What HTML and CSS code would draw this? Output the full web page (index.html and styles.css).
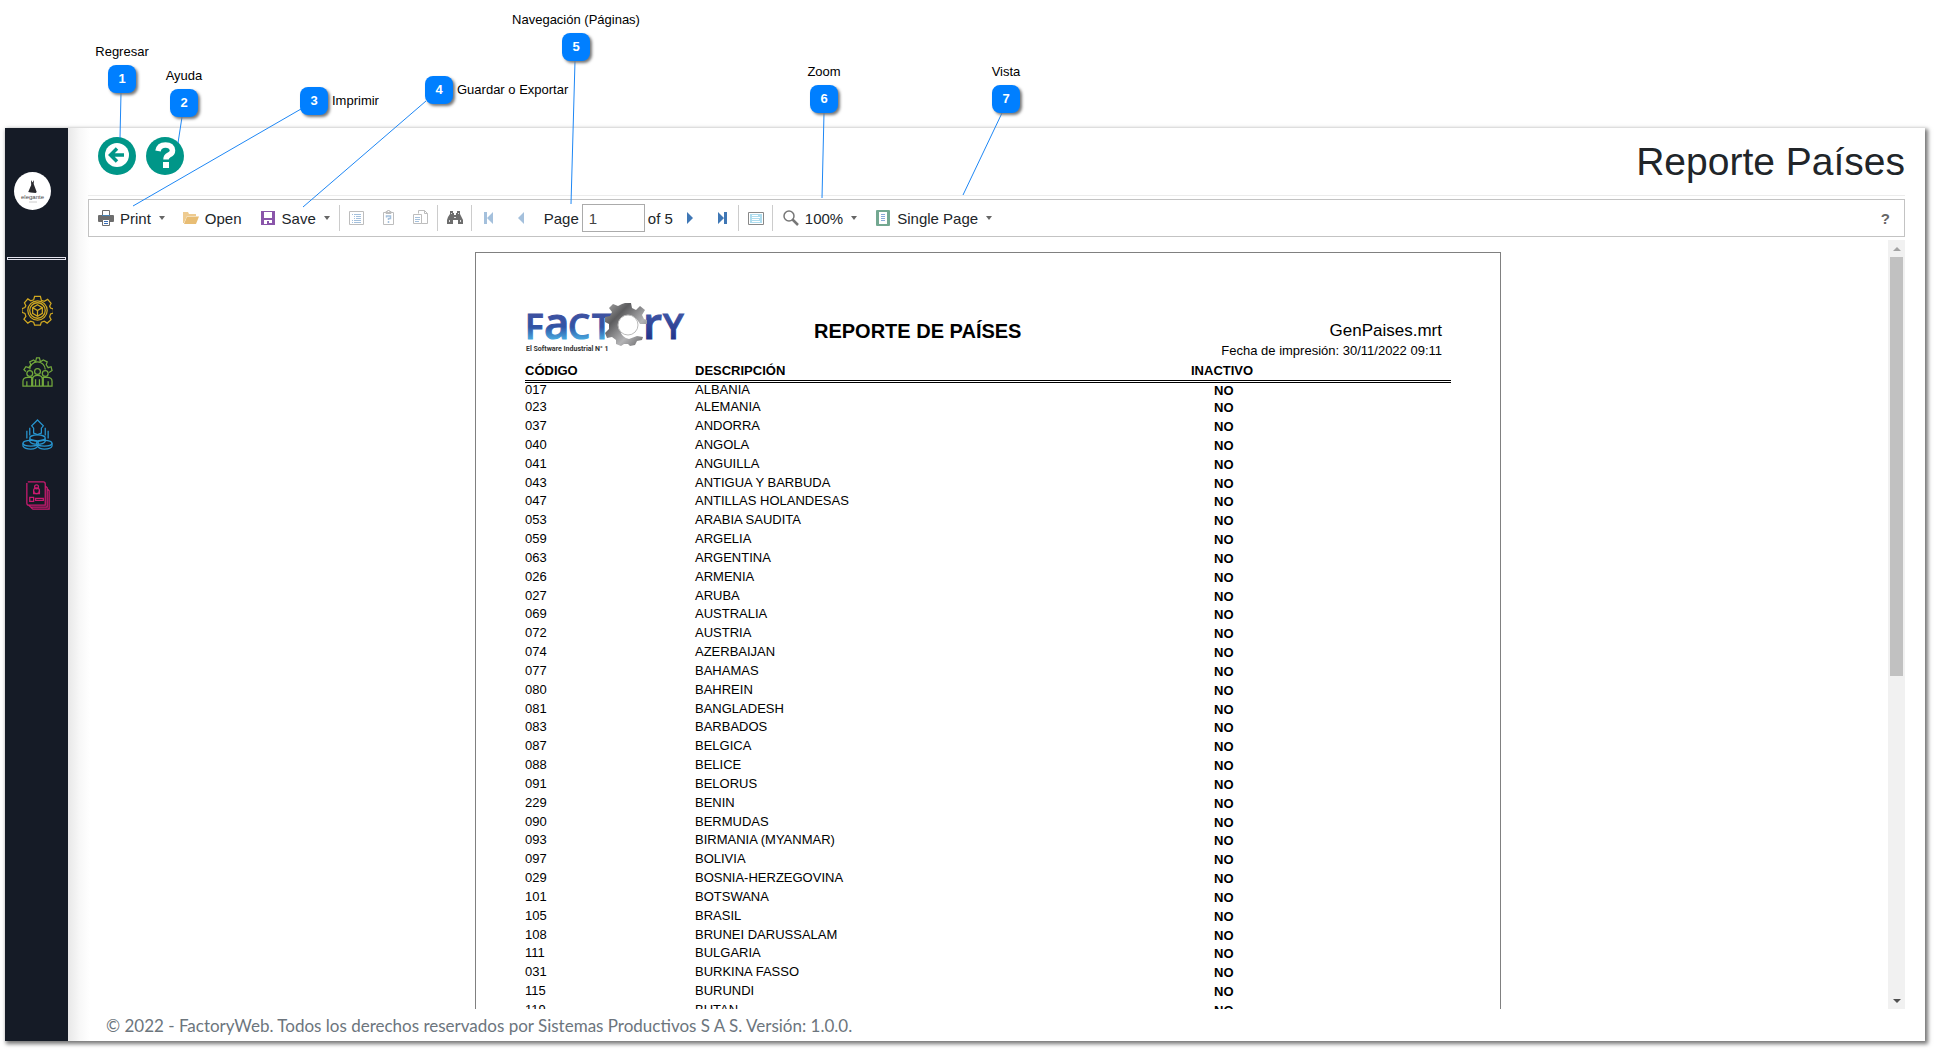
FILE: index.html
```html
<!DOCTYPE html>
<html lang="es">
<head>
<meta charset="utf-8">
<title>Reporte Países</title>
<link rel="stylesheet" href="styles.css">
</head>
<body>
<div class="app">
  <nav class="sidebar" aria-label="Principal">
    <a class="avatar" href="#" aria-label="elegante">
      <svg width="37" height="38" viewBox="0 0 37 38"><path d="M17 8l1.500 2.500L20 8l-.3 4 3 8-1 1-5-.5-2.500-.5 3-7z" fill="#2a2a2e"/><text x="18.500" y="27" text-anchor="middle" class="avatar-name">elegante</text><path d="M15 30h8" stroke="#ccc"/></svg>
    </a>
    <div class="side-rule"></div>
    <a class="side-link yellow" href="#" aria-label="Producción">
      <svg viewBox="0 0 32 32"><path d="M13 1.500h6l1 4 3 1 3.500-2 3.500 4-1.500 3 1 2 3 1v4l-3 1-1 3 1.500 3-4 3.500-3-2-3 1-1 3h-6l-1-3-3-1-3 2-4-4 2-3-1-3-3-1v-4l3-1 1-2-1.500-3 3.500-4 3 2 3-1z"/><circle cx="16" cy="16" r="10"/><circle cx="16" cy="16" r="8"/><path d="M16 10l5 3v6l-5 3-5-3v-6zM11 13l5 3 5-3M16 16v6"/></svg>
    </a>
    <a class="side-link green" href="#" aria-label="Personal">
      <svg viewBox="0 0 32 32"><path d="M4 15l-2-2 2-3 3 1 2-3-1-3 4-2 2 2 1-4h3l1 4 3-2 4 2-1 3 2 3 3-1 1 4-3 2M8 13a8 8 0 0 1 16 0"/><circle cx="8" cy="17" r="3"/><circle cx="16" cy="15" r="3"/><circle cx="24" cy="17" r="3"/><path d="M1 30v-5q0-4 5-4h4v9zM22 30v-9h4q5 0 5 4v5zM11 30v-7q0-4 5-4t5 4v7zM5 25v5M27 25v5M14 23v7M18 23v7M1 30h30"/></svg>
    </a>
    <a class="side-link blue" href="#" aria-label="Finanzas">
      <svg viewBox="0 0 32 32"><path d="M16 1l6 6-2 2.500v5L16 16l-4-1.500v-5L10 7zM5 12v8M8 9v8M24 9v8M27 12v8"/><ellipse cx="16" cy="19.500" rx="8" ry="3"/><path d="M8 20v3q2 3 8 3t8-3v-3"/><ellipse cx="9" cy="25" rx="8" ry="3"/><ellipse cx="23" cy="25" rx="8" ry="3"/><path d="M1 25v3q2 3 8 3 6 0 7-3 2 3 7 3 7 0 8-3v-3"/></svg>
    </a>
    <a class="side-link pink" href="#" aria-label="Documentos">
      <svg viewBox="0 0 32 32"><path d="M6 1h16q2 0 2 2v22H7q-2 0-2-2V2M24 5l2 2v20H9M26 8l2 2v19H11M7 25l2 2 2 2"/><circle cx="15" cy="6" r="2"/><circle cx="15" cy="10" r="3"/><path d="M12 10v3h6v-3M8 17h4v4H8zM14 18h8v2h-8z"/></svg>
    </a>
  </nav>

  <main class="content">
    <header class="page-head">
      <div class="actions">
        <button class="round" type="button" aria-label="Regresar"><svg viewBox="0 0 38 38"><circle cx="19" cy="18" r="12" fill="#fff"/><path d="M19 11.500L12.500 18l6.500 6.500M13 18h13" fill="none" stroke="#009688" stroke-width="3.500"/></svg></button>
        <button class="round" type="button" aria-label="Ayuda"><svg viewBox="0 0 38 38"><path d="M12 14q1-6 7.500-6t7 5.500q0 3-3.500 4.500-3 1.500-3 4.500" fill="none" stroke="#fff" stroke-width="5.500"/><path d="M17 25h6v6h-6z" fill="#fff"/></svg></button>
      </div>
      <h1>Reporte Países</h1>
    </header>

    <div class="toolbar" role="toolbar">
      <button type="button"><svg viewBox="0 0 16 16"><path d="M0 6q0-1 1-1h14q1 0 1 1v5q0 1-1 1H1q-1 0-1-1z" fill="#6d6d6d"/><path d="M4.500 .5h7v5h-7z" fill="#fff" stroke="#6d6d6d"/><path d="M4 5.500h8" stroke="#4682b4"/><path d="M4.500 9.500h7v6h-7z" fill="#fff" stroke="#6d6d6d"/><path d="M6 11.500h4M6 13.500h4" stroke="#3a6eb5"/></svg><span>Print</span><i class="caret"></i></button>
      <button type="button"><svg viewBox="0 0 16 16"><path d="M0 13V2h5l1 2h7v2H4L1 13z" fill="#eecb90"/><path d="M4 6.500h12L13 14H1z" fill="#e8bd74"/></svg><span>Open</span></button>
      <button type="button"><svg viewBox="0 0 16 16"><path d="M1 1h14v14H1z" fill="#8a55aa"/><path d="M4 2h8v6H4zM4 10h8v3H9v-2H7v3H4z" fill="#fff"/></svg><span>Save</span><i class="caret"></i></button>
      <i class="sep"></i>
      <button class="icon" type="button" aria-label="Bookmarks"><svg viewBox="0 0 16 16"><path d="M.5 1.500h14v13H.5z" fill="none" stroke="#bdbdbd"/><path d="M3 4.500h1M5 4.500h7M5 6.500h1M7 6.500h5M5 8.500h1M7 8.500h5M3 10.500h1M5 10.500h7M3 12.500h1M5 12.500h7" stroke="#a4c0dc"/></svg></button>
      <button class="icon" type="button" aria-label="Parameters"><svg viewBox="0 0 16 16"><path d="M2.500 2.500h10v12h-10zM5 3.500h5v-2H8.500v-1h-2v1H5z" fill="none" stroke="#bdbdbd"/><path d="M5.500 7.500V6h4v2.500h-2V10M7.500 11v2" fill="none" stroke="#a4c0dc" stroke-width="1.500"/></svg></button>
      <button class="icon" type="button" aria-label="Resources"><svg viewBox="0 0 16 16"><path d="M5.500 3.500v-3h6l3 3v10h-6" fill="none" stroke="#bdbdbd"/><path d="M11.500 .5v3h3M.5 4.500h8v9h-8z" fill="none" stroke="#bdbdbd"/><path d="M2 7.500h5M2 9.500h5M2 11.500h4" stroke="#a4c0dc"/></svg></button>
      <i class="sep"></i>
      <button class="icon" type="button" aria-label="Find"><svg viewBox="0 0 16 16"><path d="M3 1h3v2h1v2h2V3h1V1h3v3l2 4 1 2v4h-5v-4H6v4H0v-4l1-3 2-3z" fill="#6d6d6d"/><path d="M4 3.500h1M11 3.500h1M2.500 10v2M13.500 10v2M7 7.500h2" stroke="#ddd"/></svg></button>
      <i class="sep"></i>
      <button class="icon" type="button" aria-label="First page"><svg viewBox="0 0 16 16"><path d="M3 2h3v12H3zM12 2v12L6 8z" fill="#a4c0dc"/></svg></button>
      <button class="icon" type="button" aria-label="Previous page"><svg viewBox="0 0 16 16"><path d="M11 2v12L5 8z" fill="#a4c0dc"/></svg></button>
      <label class="pager">Page<input type="text" value="1"></label>
      <span>of 5</span>
      <button class="icon" type="button" aria-label="Next page"><svg viewBox="0 0 16 16"><path d="M5 2v12l6-6z" fill="#3f77b5"/></svg></button>
      <button class="icon" type="button" aria-label="Last page"><svg viewBox="0 0 16 16"><path d="M10 2h3v12h-3zM4 2v12l6-6z" fill="#3f77b5"/></svg></button>
      <i class="sep"></i>
      <button class="icon" type="button" aria-label="Full screen"><svg viewBox="0 0 16 16"><path d="M.5 2.500h15v12H.5z" fill="#fff" stroke="#888"/><path d="M2 4h12v9H2z" fill="#aedcee"/><path d="M4 5.500h6M4 7.500h8M4 9.500h7M4 11.500h8" stroke="#fff"/></svg></button>
      <i class="sep"></i>
      <button type="button"><svg viewBox="0 0 16 16"><circle cx="6" cy="6" r="5" fill="none" stroke="#777" stroke-width="1.500"/><path d="M9.500 9.500L15 15" stroke="#777" stroke-width="2.500"/></svg><span>100%</span><i class="caret"></i></button>
      <button type="button"><svg viewBox="0 0 16 16"><rect x="1" y="0" width="14" height="16" rx="1" fill="#73a891"/><path d="M4 2h8v12H4z" fill="#fff"/><path d="M6 4.500h4M6 6.500h4M6 8.500h4M6 10.500h4" stroke="#88a9d8"/></svg><span>Single Page</span><i class="caret"></i></button>
      <button class="about" type="button">?</button>
    </div>

    <section class="viewer">
      <div class="stage">
        <article class="paper">
          <header class="report-head">
            <svg class="logo" viewBox="0 0 162 50" role="img" aria-label="Factory">
              <defs>
                <linearGradient id="blue" gradientUnits="userSpaceOnUse" x1="0" y1="7" x2="0" y2="38"><stop offset="0" stop-color="#42509f"/><stop offset=".55" stop-color="#3154a5"/><stop offset="1" stop-color="#4ab4e6"/></linearGradient>
                <linearGradient id="navy" gradientUnits="userSpaceOnUse" x1="0" y1="7" x2="0" y2="38"><stop offset="0" stop-color="#4359a7"/><stop offset="1" stop-color="#1f3289"/></linearGradient>
                <linearGradient id="steel" x1="0" y1="0" x2="1" y2="1"><stop offset="0" stop-color="#aaa"/><stop offset=".3" stop-color="#5c5c5e"/><stop offset=".65" stop-color="#b4b4b6"/><stop offset="1" stop-color="#5a5a5c"/></linearGradient>
              </defs>
              <g class="logo-cap" fill="url(#blue)" stroke="url(#blue)"><text x="0" y="36">F</text><text class="logo-low" x="19" y="36">a</text><text x="43" y="36">C</text><text x="67" y="36">T</text></g>
              <g class="logo-cap" fill="url(#navy)" stroke="url(#navy)"><text class="logo-low" x="118" y="36">r</text><text x="138" y="36">Y</text></g>
              <path fill="url(#steel)" fill-rule="evenodd" d="M100 0h6l1 5 4 2 4-4 5 4-3 5 2 4 3 1v4h-7l-2-3q-5-7-12-4-7 4-6 13 2 8 9 9l8-3 6 1-1 3-5 1-2 4-5 1-2-2h-4l-3 2-5-2v-4l-4-3-5 1-2-5 4-4v-5l-4-2v-5l5-1 2-4-3-4 4-4 5 2 4-2z"/>
              <circle cx="103" cy="22" r="10" fill="#fff" stroke="#bbb"/>
              <text class="logo-tag" x="1" y="48">El Software Industrial N° 1</text>
            </svg>
            <h2>REPORTE DE PAÍSES</h2>
            <div class="meta"><div class="file">GenPaises.mrt</div><div>Fecha de impresión: 30/11/2022 09:11</div></div>
          </header>
          <table>
            <thead><tr><th class="c-code">CÓDIGO</th><th class="c-desc">DESCRIPCIÓN</th><th class="c-off">INACTIVO</th></tr></thead>
            <tbody>
<tr><td>017</td><td>ALBANIA</td><td>NO</td></tr>
<tr><td>023</td><td>ALEMANIA</td><td>NO</td></tr>
<tr><td>037</td><td>ANDORRA</td><td>NO</td></tr>
<tr><td>040</td><td>ANGOLA</td><td>NO</td></tr>
<tr><td>041</td><td>ANGUILLA</td><td>NO</td></tr>
<tr><td>043</td><td>ANTIGUA Y BARBUDA</td><td>NO</td></tr>
<tr><td>047</td><td>ANTILLAS HOLANDESAS</td><td>NO</td></tr>
<tr><td>053</td><td>ARABIA SAUDITA</td><td>NO</td></tr>
<tr><td>059</td><td>ARGELIA</td><td>NO</td></tr>
<tr><td>063</td><td>ARGENTINA</td><td>NO</td></tr>
<tr><td>026</td><td>ARMENIA</td><td>NO</td></tr>
<tr><td>027</td><td>ARUBA</td><td>NO</td></tr>
<tr><td>069</td><td>AUSTRALIA</td><td>NO</td></tr>
<tr><td>072</td><td>AUSTRIA</td><td>NO</td></tr>
<tr><td>074</td><td>AZERBAIJAN</td><td>NO</td></tr>
<tr><td>077</td><td>BAHAMAS</td><td>NO</td></tr>
<tr><td>080</td><td>BAHREIN</td><td>NO</td></tr>
<tr><td>081</td><td>BANGLADESH</td><td>NO</td></tr>
<tr><td>083</td><td>BARBADOS</td><td>NO</td></tr>
<tr><td>087</td><td>BELGICA</td><td>NO</td></tr>
<tr><td>088</td><td>BELICE</td><td>NO</td></tr>
<tr><td>091</td><td>BELORUS</td><td>NO</td></tr>
<tr><td>229</td><td>BENIN</td><td>NO</td></tr>
<tr><td>090</td><td>BERMUDAS</td><td>NO</td></tr>
<tr><td>093</td><td>BIRMANIA (MYANMAR)</td><td>NO</td></tr>
<tr><td>097</td><td>BOLIVIA</td><td>NO</td></tr>
<tr><td>029</td><td>BOSNIA-HERZEGOVINA</td><td>NO</td></tr>
<tr><td>101</td><td>BOTSWANA</td><td>NO</td></tr>
<tr><td>105</td><td>BRASIL</td><td>NO</td></tr>
<tr><td>108</td><td>BRUNEI DARUSSALAM</td><td>NO</td></tr>
<tr><td>111</td><td>BULGARIA</td><td>NO</td></tr>
<tr><td>031</td><td>BURKINA FASSO</td><td>NO</td></tr>
<tr><td>115</td><td>BURUNDI</td><td>NO</td></tr>
<tr><td>119</td><td>BUTAN</td><td>NO</td></tr>
            </tbody>
          </table>
        </article>
      </div>
      <div class="scrollbar" aria-hidden="true"><i class="arrow up"></i><i class="thumb"></i><i class="arrow down"></i></div>
    </section>

    <footer>© 2022 - FactoryWeb. Todos los derechos reservados por Sistemas Productivos S A S. Versión: 1.0.0.</footer>
  </main>
</div>

<!-- Numbered guide drawn over the page -->
<div class="guide">
  <svg class="leaders" width="1100" height="220"><path d="M121 93L120 138M182 117L178 143M301 109L133 206M426 101L303 207M575 61L571 204M824 113L822 198M1002 113L963 195"/></svg>
  <div class="note n1"><b>1</b><span>Regresar</span></div>
  <div class="note n2"><b>2</b><span>Ayuda</span></div>
  <div class="note side n3"><b>3</b><span>Imprimir</span></div>
  <div class="note side n4"><b>4</b><span>Guardar o Exportar</span></div>
  <div class="note n5"><b>5</b><span>Navegación (Páginas)</span></div>
  <div class="note n6"><b>6</b><span>Zoom</span></div>
  <div class="note n7"><b>7</b><span>Vista</span></div>
</div>
</body>
</html>
```
FILE: styles.css
```css
* { box-sizing: border-box; }

body {
  margin: 0;
  height: 100vh;
  padding: 128px 9px 9px 5px;
  display: flex;
  background: #fff;
  color: #212529;
  font-family: "Liberation Sans", Arial, sans-serif;
  font-size: 13px;
  overflow: hidden;
}

h1, h2 { margin: 0; }

button {
  border: 0;
  background: none;
  font: inherit;
  color: inherit;
}

.app {
  flex: 1;
  display: flex;
  min-width: 0;
  box-shadow: 2px 2px 4px 1px #777;
  background: #fff;
}

/* Sidebar */
.sidebar {
  width: 63px;
  flex: none;
  display: flex;
  flex-direction: column;
  align-items: center;
  background: #151b26;
  padding-top: 44px;
}

.avatar {
  width: 37px;
  height: 38px;
  margin-right: 9px;
  border-radius: 50%;
  background: #fff;
}

.avatar svg { display: block; }

.avatar-name { font-size: 6px; fill: #444; }

.side-rule {
  width: 59px;
  height: 3px;
  margin: 47px 0 35px;
  border: 1px solid #e4e4ee;
}

.side-link {
  width: 31px;
  height: 31px;
  margin: 0 0 31px 2px;
}

.side-link svg {
  display: block;
  width: 31px;
  height: 31px;
  fill: none;
  stroke: currentColor;
  stroke-width: 1.3;
}

.yellow { color: #d0a821; }
.green { color: #72a83c; }
.blue { color: #2795cf; }
.pink { color: #c91b70; }

/* Content */
.content {
  flex: 1;
  min-width: 0;
  display: flex;
  flex-direction: column;
  padding: 0 20px;
  background: linear-gradient(90deg, #e8e8e8, #f8f8f8 12px, #fff 22px);
}

.page-head {
  flex: none;
  display: flex;
  justify-content: space-between;
  height: 68px;
  padding: 9px 0 0 10px;
  border-bottom: 1px solid #ececec;
}

.actions { display: flex; gap: 10px; }

.round {
  width: 38px;
  height: 38px;
  padding: 0;
  border-radius: 50%;
  background: #009688;
}

.round svg { display: block; width: 38px; height: 38px; }

h1 { font-size: 39px; font-weight: 400; line-height: 50px; }

/* Toolbar */
.toolbar {
  flex: none;
  display: flex;
  align-items: center;
  gap: 1px;
  height: 38px;
  margin: 3px 0;
  border: 1px solid #c3c3c3;
  font-size: 15px;
}

.toolbar button {
  display: flex;
  align-items: center;
  gap: 6px;
  height: 28px;
  padding: 0 8px 0 9px;
  white-space: nowrap;
}

.toolbar .icon { padding: 0 7px 0 8px; }

.toolbar button svg { width: 16px; height: 16px; flex: none; }

.caret {
  margin-left: 2px;
  border: 3px solid transparent;
  border-top: 4px solid #666;
  border-bottom: 0;
}

.sep { width: 1px; height: 26px; background: #ccc; }

.pager { display: flex; align-items: center; gap: 3px; padding: 0 2px 0 7px; }

.pager input {
  width: 63px;
  height: 28px;
  padding: 0 6px;
  border: 1px solid #ababab;
  font: inherit;
  color: #444;
}

.toolbar .about { margin-left: auto; padding-right: 14px; font-weight: 700; color: #666; }

/* Report viewer */
.viewer {
  flex: 1;
  min-height: 0;
  display: flex;
}

.stage {
  flex: 1;
  min-width: 0;
  padding-top: 12px;
  overflow: hidden;
}

.paper {
  max-width: 1026px;
  margin: 0 auto;
  padding: 50px 49px 0;
  border: 1px solid #808080;
  background: #fff;
  color: #000;
}

.report-head {
  display: grid;
  grid-template-columns: 289px 1fr auto;
  height: 59px;
  padding-right: 9px;
}

.logo { width: 162px; height: 50px; overflow: visible; }
.logo-cap { font: 600 35px "Open Sans", sans-serif; stroke-width: 1; }
.logo-low { font-size: 44px; }
.logo-tag { font: 700 7px Roboto, sans-serif; fill: #333; }

h2 { font-size: 20px; line-height: 24px; padding-top: 16px; }

.meta { padding-top: 17px; text-align: right; line-height: 18px; }
.file { font-size: 17px; line-height: 22px; }

table { width: 100%; border-collapse: collapse; table-layout: fixed; }

th {
  padding: 0;
  text-align: left;
  line-height: 18px;
  border-bottom: 3px double #000;
}

.c-code { width: 170px; }
.c-off { width: 260px; }

td { padding: 0; height: 19px; line-height: 18px; vertical-align: top; }
td:last-child { padding: 2px 0 0 23px; line-height: 16px; font-weight: 700; }
tr:nth-child(6n) td { height: 18px; }
tr:first-child td { height: 15px; line-height: 14px; }
tr:first-child td:last-child { padding-top: 1px; }

/* Scrollbar */
.scrollbar {
  width: 17px;
  display: flex;
  flex-direction: column;
  align-items: center;
  background: #f1f1f1;
}

.thumb { flex: 0 0 54.5%; width: 13px; background: #c1c1c1; }
.arrow { margin: 7px 0 6px; border: 4px solid transparent; }
.up { border-top: 0; border-bottom-color: #a3a3a3; }
.down { margin-top: auto; border-bottom: 0; border-top-color: #505050; }

footer {
  flex: none;
  height: 32px;
  padding: 3px 18px 0;
  font-family: Lato, sans-serif;
  font-size: 17px;
  line-height: 28px;
  color: #6c757d;
}

/* Guide overlay */
.leaders { position: absolute; left: 0; top: 0; fill: none; stroke: #1e87f5; pointer-events: none; }

.note {
  position: absolute;
  display: flex;
  flex-direction: column-reverse;
  align-items: center;
  gap: 4px;
  width: 140px;
  line-height: 18px;
  color: #000;
}

.note b {
  width: 28px;
  height: 28px;
  border-radius: 8px;
  background: #007fff;
  box-shadow: 2px 2px 3px #777;
  color: #fff;
  line-height: 28px;
  text-align: center;
}

.side { flex-direction: row; width: auto; }

.n1 { left: 52px; top: 43px; }
.n2 { left: 114px; top: 67px; }
.n3 { left: 300px; top: 87px; }
.n4 { left: 425px; top: 76px; }
.n5 { left: 506px; top: 11px; }
.n6 { left: 754px; top: 63px; }
.n7 { left: 936px; top: 63px; }
```
